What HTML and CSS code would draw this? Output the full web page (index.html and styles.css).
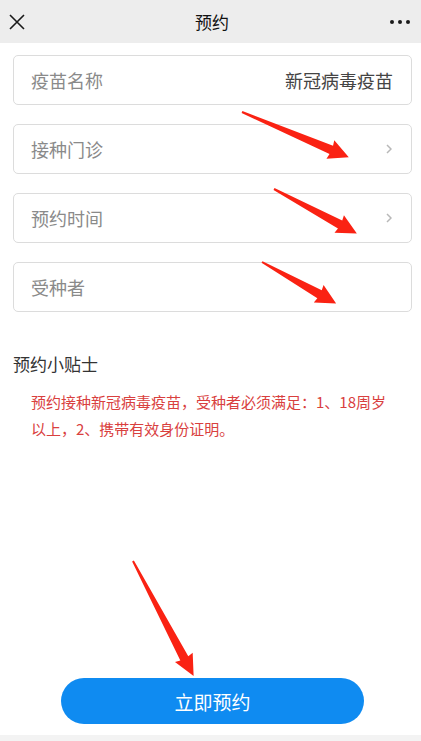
FILE: index.html
```html
<!DOCTYPE html>
<html lang="zh-CN">
<head>
  <meta charset="UTF-8">
  <meta name="viewport" content="width=device-width, initial-scale=1.0">
  <title>预约</title>
  <link rel="stylesheet" href="styles.css">
</head>
<body>
  <div class="page">
    <!-- top bar -->
    <div class="topbar">
      <svg class="close" width="16" height="16" viewBox="0 0 16 16">
        <path d="M1 1 L15 15 M15 1 L1 15" stroke="#1a1a1a" stroke-width="1.6" fill="none"/>
      </svg>
      <div class="title">预约</div>
      <div class="more"><i></i><i></i><i></i></div>
    </div>

    <div class="form">
      <div class="field">
        <span class="label">疫苗名称</span>
        <span class="value">新冠病毒疫苗</span>
      </div>
      <div class="field">
        <span class="label">接种门诊</span>
        <svg class="chev" width="6" height="10" viewBox="0 0 6 10">
          <path d="M1 1 L5 5 L1 9" stroke="#b8b8b8" stroke-width="1.5" fill="none"/>
        </svg>
      </div>
      <div class="field">
        <span class="label">预约时间</span>
        <svg class="chev" width="6" height="10" viewBox="0 0 6 10">
          <path d="M1 1 L5 5 L1 9" stroke="#b8b8b8" stroke-width="1.5" fill="none"/>
        </svg>
      </div>
      <div class="field">
        <span class="label">受种者</span>
      </div>
    </div>

    <div class="tips">
      <h3>预约小贴士</h3>
      <p>预约接种新冠病毒疫苗，受种者必须满足：1、18周岁以上，2、携带有效身份证明。</p>
    </div>

    <div class="bottom">
      <button class="btn-book">立即预约</button>
    </div>
    <div class="footer-strip"></div>

    <!-- red annotation arrows over the page -->
    <svg class="marks" width="421" height="741" viewBox="0 0 421 741">
      <g fill="#fa2213">
        <g transform="translate(242,112) rotate(23)">
          <polygon points="0,-1 97,-4.5 96,-10 116,0 96,10 97,4.5 0,1"/>
        </g>
        <g transform="translate(274,189) rotate(28.2)">
          <polygon points="0,-1 75,-4.5 74,-10 94,0 74,10 75,4.5 0,1"/>
        </g>
        <g transform="translate(262,262) rotate(29.3)">
          <polygon points="0,-1 66,-4.5 65,-10 85,0 65,10 66,4.5 0,1"/>
        </g>
        <g transform="translate(133,561) rotate(62.2)">
          <polygon points="0,-1 110,-4.5 109,-10 130,0 109,10 110,4.5 0,1"/>
        </g>
      </g>
    </svg>
  </div>
</body>
</html>
```

FILE: styles.css
```css
/* booking page */

* {
  box-sizing: border-box;
}

body {
  margin: 0;
  background: #fff;
  font-family: "Noto Sans CJK SC", "Noto Sans", sans-serif;
  color: #333;
}

.page {
  position: relative;
  width: 421px;
  min-height: 741px;
  display: flex;
  flex-direction: column;
}

/* top bar */
.topbar {
  height: 43px;
  background: #ededed;
  display: flex;
  align-items: center;
  justify-content: space-between;
  padding: 0 11px 0 9px;
}

.close {
  display: block;
}

.title {
  font-size: 17px;
  color: #111;
  margin-left: 9px;
}

.more {
  display: flex;
  gap: 4px;
  width: 20px;
}

.more i {
  width: 4px;
  height: 4px;
  border-radius: 50%;
  background: #1a1a1a;
}

/* form fields */
.form {
  padding: 12px 9px 0 13px;
  display: flex;
  flex-direction: column;
  gap: 19px;
}

.field {
  height: 50px;
  border: 1px solid #dcdcdc;
  border-radius: 5px;
  display: flex;
  align-items: center;
  justify-content: space-between;
  padding: 0 18px 0 17px;
  font-size: 18px;
}

.label {
  color: #8a8a8a;
}

.value {
  color: #444;
}

.chev {
  display: block;
  margin-right: 1px;
}

/* tips */
.tips {
  padding: 0 26px 0 13px;
  margin-top: 40px;
}

.tips h3 {
  margin: 0;
  font-size: 17px;
  font-weight: normal;
  line-height: 24px;
  color: #333;
}

.tips p {
  margin: 12px 0 0 18px;
  font-size: 15px;
  line-height: 27px;
  color: #d9403e;
}

/* bottom button */
.bottom {
  margin-top: auto;
  display: flex;
  justify-content: center;
  padding: 0 0 11px 4px;
}

.btn-book {
  width: 303px;
  height: 46px;
  border: none;
  border-radius: 23px;
  background: #0f8bf1;
  color: #fff;
  font-family: inherit;
  font-size: 19px;
}

.footer-strip {
  height: 6px;
  background: #f3f3f3;
}

.marks {
  position: absolute;
  left: 0;
  top: 0;
  pointer-events: none;
}
```
